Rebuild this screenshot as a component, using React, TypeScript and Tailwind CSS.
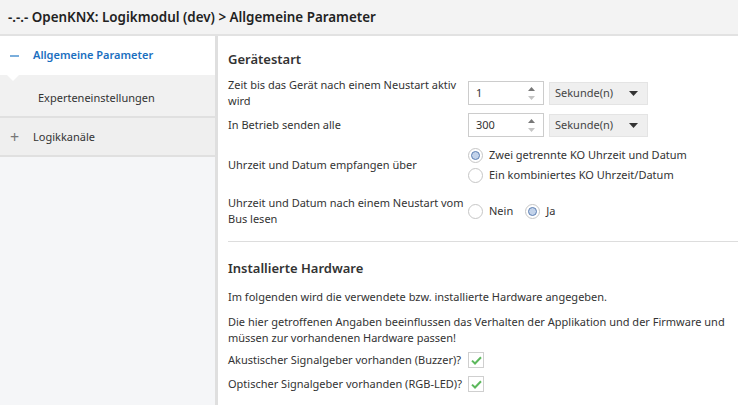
import { ReactNode } from "react";

const Radio = ({ checked, label }: { checked?: boolean; label: string }) => (
  <label className="flex items-center gap-[6px] h-[20px]">
    <span className="w-[15px] h-[15px] rounded-full border border-[#c6c6c6] bg-white flex items-center justify-center">
      {checked && <span className="w-[9px] h-[9px] rounded-full bg-[#c3d3ea] border border-[#5e80b3]"></span>}
    </span>
    <span>{label}</span>
  </label>
);

const Check = () => (
  <span className="w-[16px] h-[16px] border border-[#cfcfcf] bg-white flex items-center justify-center">
    <svg width="11" height="9" viewBox="0 0 11 9">
      <path d="M1 4.6 L4 7.5 L10 1.2" fill="none" stroke="#5cb85c" strokeWidth="2" />
    </svg>
  </span>
);

const NumberInput = ({ value }: { value: string }) => (
  <div className="w-[76px] h-[24px] border border-[#cccccc] bg-white flex items-center pl-[7px] pr-[8px]">
    <span className="flex-1">{value}</span>
    <div className="flex flex-col gap-[5px]">
      <svg width="7" height="4" viewBox="0 0 7 4">
        <path d="M0 4 L3.5 0 L7 4 Z" fill="#777" />
      </svg>
      <svg width="7" height="4" viewBox="0 0 7 4">
        <path d="M0 0 L3.5 4 L7 0 Z" fill="#c4c4c4" />
      </svg>
    </div>
  </div>
);

const Select = ({ value }: { value: string }) => (
  <div className="ml-[5px] w-[99px] h-[23px] bg-[#efefef] border border-[#e4e4e4] flex items-center pl-[5px] pr-[9px]">
    <span className="flex-1 text-[#444]">{value}</span>
    <svg width="9" height="5" viewBox="0 0 9 5">
      <path d="M0 0 L4.5 5 L9 0 Z" fill="#333" />
    </svg>
  </div>
);

const Row = ({ label, className, children }: { label: ReactNode; className: string; children: ReactNode }) => (
  <div className={`flex items-center ${className}`}>
    <div className="w-[240px] shrink-0 leading-[16px] whitespace-nowrap">{label}</div>
    <div className="flex items-center">{children}</div>
  </div>
);

export default function App() {
  return (
    <div className="w-[738px] h-[405px] overflow-hidden bg-white font-['Noto_Sans',sans-serif] text-[11px] text-[#333]">
      <div className="h-[36px] bg-[#f3f3f3] border-b-2 border-[#e2e2e2] flex items-center px-[8px] text-[13.4px] font-semibold text-[#222]">
        -.-.- OpenKNX: Logikmodul (dev) &gt; Allgemeine Parameter
      </div>
      <div className="flex h-[369px]">
        <div className="w-[218px] shrink-0 bg-[#f5f6f8] border-r-[3px] border-[#dfdfdf] flex flex-col">
          <div className="h-[39px] bg-white flex items-center pl-[10px] text-[#1b6fbf] font-semibold">
            <span className="w-[9px] h-[2px] bg-[#7aaedc]"></span>
            <span className="ml-[14px]">Allgemeine Parameter</span>
          </div>
          <div className="relative h-[43px] bg-[#f1f1f1] border-b-2 border-[#e0e0e0] flex items-center pl-[38px] pt-[5px]">
            <span className="absolute left-[7px] top-0 w-0 h-0 border-l-[6px] border-r-[6px] border-t-[6px] border-l-transparent border-r-transparent border-t-white"></span>
            Experteneinstellungen
          </div>
          <div className="h-[39px] bg-[#efefef] border-b-2 border-[#e0e0e0] flex items-center pl-[10px] pt-[1px]">
            <span className="text-[#777] text-[16px] leading-none w-[9px]">+</span>
            <span className="ml-[14px]">Logikkanäle</span>
          </div>
        </div>
        <div className="flex-1 pl-[10px]">
          <div className="mt-[14px] h-[20px] flex items-center text-[13px] font-semibold text-[#333]">Gerätestart</div>
          <Row
            label={
              <>
                Zeit bis das Gerät nach einem Neustart aktiv
                <br />
                wird
              </>
            }
            className="mt-[7px] h-[32px]"
          >
            <NumberInput value="1" />
            <Select value="Sekunde(n)" />
          </Row>
          <Row label="In Betrieb senden alle" className="mt-[3px] h-[24px] pt-[2px]">
            <NumberInput value="300" />
            <Select value="Sekunde(n)" />
          </Row>
          <Row label="Uhrzeit und Datum empfangen über" className="mt-[9px] h-[40px]">
            <div className="flex flex-col">
              <Radio checked label="Zwei getrennte KO Uhrzeit und Datum" />
              <Radio label="Ein kombiniertes KO Uhrzeit/Datum" />
            </div>
          </Row>
          <Row
            label={
              <>
                Uhrzeit und Datum nach einem Neustart vom
                <br />
                Bus lesen
              </>
            }
            className="mt-[10px] h-[32px]"
          >
            <div className="flex items-center gap-[12px]">
              <Radio label="Nein" />
              <Radio checked label="Ja" />
            </div>
          </Row>
          <div className="mt-[14px] h-px bg-[#dddddd]"></div>
          <div className="mt-[17px] h-[20px] flex items-center text-[13px] font-semibold text-[#333]">Installierte Hardware</div>
          <p className="mt-[10px] leading-[16px]">Im folgenden wird die verwendete bzw. installierte Hardware angegeben.</p>
          <p className="mt-[9px] leading-[16px] pr-[12px]">
            Die hier getroffenen Angaben beeinflussen das Verhalten der Applikation und der Firmware und müssen zur vorhandenen Hardware passen!
          </p>
          <Row label="Akustischer Signalgeber vorhanden (Buzzer)?" className="mt-[4px] h-[20px]">
            <Check />
          </Row>
          <Row label="Optischer Signalgeber vorhanden (RGB-LED)?" className="mt-[4px] h-[20px]">
            <Check />
          </Row>
        </div>
      </div>
    </div>
  );
}
